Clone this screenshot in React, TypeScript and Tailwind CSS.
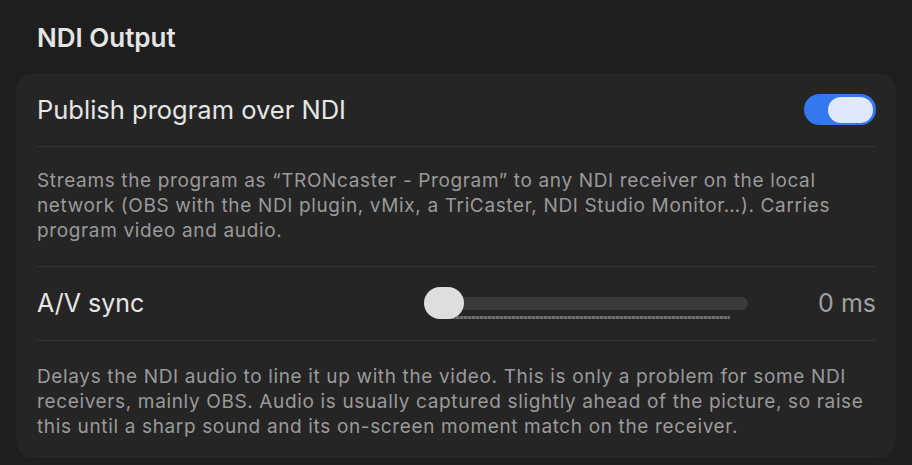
import React from "react";

export default function App() {
  return (
    <div
      className="w-[912px] h-[465px] bg-[#1e1e1e] px-4 pt-[21px] overflow-hidden"
      style={{ fontFamily: "Inter, 'Noto Sans', sans-serif" }}
    >
      <h2 className="pl-[21px] text-[26px] leading-[34px] font-semibold text-[#e4e4e4] h-[52px]">
        NDI Output
      </h2>
      <div className="w-[880px] rounded-[18px] bg-[#252525] pl-[21px] pr-[20px]">
        <div className="h-[74px] flex items-center justify-between border-b border-[#333333]">
          <span className="text-[25.5px] text-[#e6e6e6] mt-[1px]">Publish program over NDI</span>
          <div className="w-[72px] h-[31px] rounded-full bg-[#3478f0] flex items-center justify-end pr-[3px]">
            <div className="w-[45px] h-[26px] rounded-full bg-[#e0e9fc]" />
          </div>
        </div>
        <p className="pt-[21px] pb-[23px] text-[19px] leading-[25px] tracking-[0.64px] text-[#9a9a9a] border-b border-[#333333] whitespace-nowrap">
          <span className="block">Streams the program as “TRONcaster - Program” to any NDI receiver on the local</span>
          <span className="block">network (OBS with the NDI plugin, vMix, a TriCaster, NDI Studio Monitor…). Carries</span>
          <span className="block">program video and audio.</span>
        </p>
        <div className="h-[74px] flex items-center border-b border-[#333333]">
          <span className="text-[25px] text-[#e6e6e6] w-[387px] mt-[1px]">A/V sync</span>
          <div className="relative w-[324px] h-[32px] -mt-[2px]">
            <div className="absolute left-0 right-0 top-[10px] h-[13px] rounded-full bg-[#3a3a3a]" />
            <div className="absolute left-[24px] right-[18px] top-[29px] h-[3px] bg-[repeating-linear-gradient(90deg,#6e6e6e_0_3px,#4a4a4a_3px_4px)]" />
            <div className="absolute left-0 top-0 w-[40px] h-[32px] rounded-full bg-[#dedede]" />
          </div>
          <span className="ml-auto text-[25px] text-[#a0a0a0]">0 ms</span>
        </div>
        <p className="pt-[23px] pb-[19px] text-[19px] leading-[25px] tracking-[0.64px] text-[#9a9a9a] whitespace-nowrap">
          <span className="block">Delays the NDI audio to line it up with the video. This is only a problem for some NDI</span>
          <span className="block">receivers, mainly OBS. Audio is usually captured slightly ahead of the picture, so raise</span>
          <span className="block">this until a sharp sound and its on-screen moment match on the receiver.</span>
        </p>
      </div>
    </div>
  );
}
